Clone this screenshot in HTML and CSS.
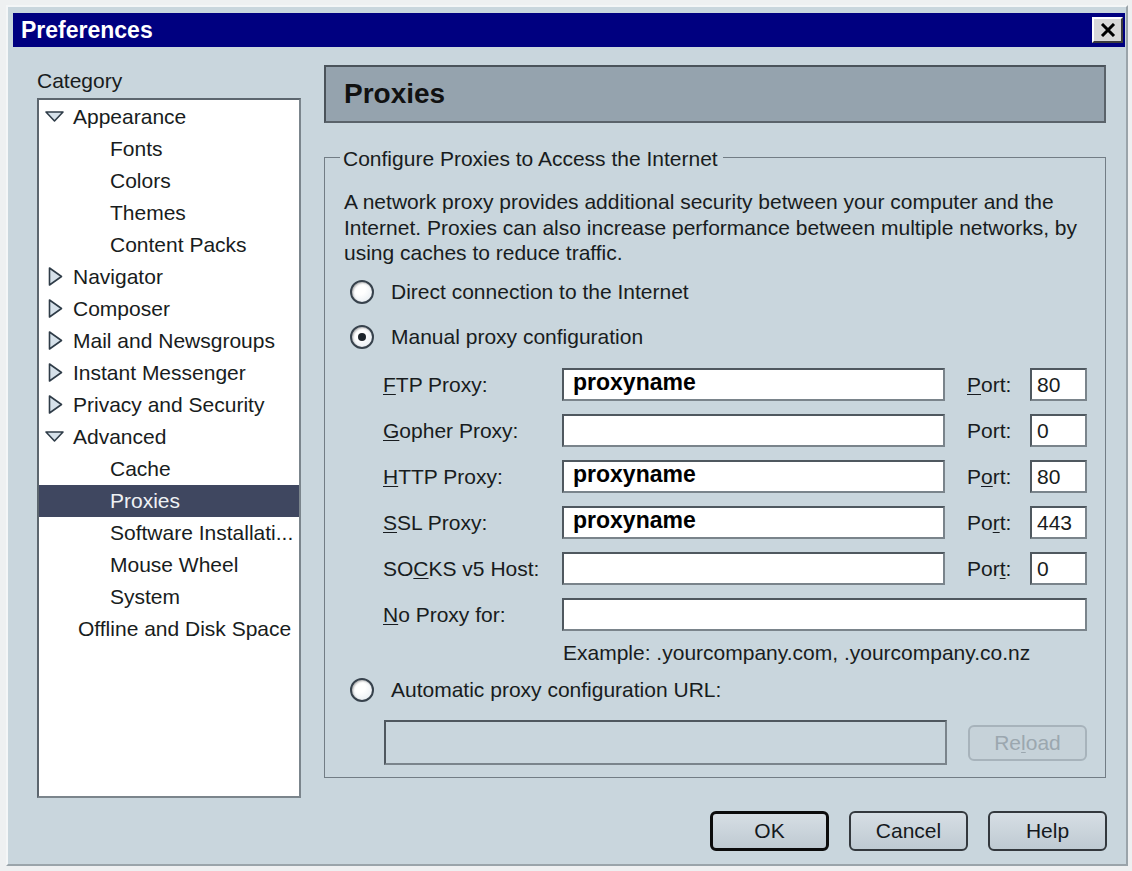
FILE: index.html
```html
<!DOCTYPE html>
<html lang="en">
<head>
<meta charset="utf-8">
<title>Preferences</title>
<link rel="stylesheet" href="styles.css">
</head>
<body>
<div class="window">
  <div class="titlebar">
    <span class="title">Preferences</span>
    <button class="close" aria-label="Close">
      <svg width="16" height="14" viewBox="0 0 16 14"><path d="M2 1 L14 13 M14 1 L2 13" stroke="#000" stroke-width="3" fill="none"/></svg>
    </button>
  </div>

  <div class="main">
    <div class="sidebar">
      <div class="cat-label">Category</div>
      <ul class="tree">
        <li class="row top"><svg class="twisty" viewBox="0 0 20 20"><polygon points="1,5 18,5 9.5,14" /></svg>Appearance</li>
        <li class="row child">Fonts</li>
        <li class="row child">Colors</li>
        <li class="row child">Themes</li>
        <li class="row child">Content Packs</li>
        <li class="row top"><svg class="twisty" viewBox="0 0 20 20"><polygon points="4.5,1 16.5,9.5 4.5,18" /></svg>Navigator</li>
        <li class="row top"><svg class="twisty" viewBox="0 0 20 20"><polygon points="4.5,1 16.5,9.5 4.5,18" /></svg>Composer</li>
        <li class="row top"><svg class="twisty" viewBox="0 0 20 20"><polygon points="4.5,1 16.5,9.5 4.5,18" /></svg>Mail and Newsgroups</li>
        <li class="row top"><svg class="twisty" viewBox="0 0 20 20"><polygon points="4.5,1 16.5,9.5 4.5,18" /></svg>Instant Messenger</li>
        <li class="row top"><svg class="twisty" viewBox="0 0 20 20"><polygon points="4.5,1 16.5,9.5 4.5,18" /></svg>Privacy and Security</li>
        <li class="row top"><svg class="twisty" viewBox="0 0 20 20"><polygon points="1,5 18,5 9.5,14" /></svg>Advanced</li>
        <li class="row child">Cache</li>
        <li class="row child selected">Proxies</li>
        <li class="row child">Software Installati...</li>
        <li class="row child">Mouse Wheel</li>
        <li class="row child">System</li>
        <li class="row leaf">Offline and Disk Space</li>
      </ul>
    </div>

    <div class="panel">
      <div class="panel-header">Proxies</div>
      <fieldset class="group">
        <legend>Configure Proxies to Access the Internet</legend>
        <p class="desc">A network proxy provides additional security between your computer and the<br>Internet. Proxies can also increase performance between multiple networks, by<br>using caches to reduce traffic.</p>

        <label class="radio-row first"><span class="radio"></span>Direct connection to the Internet</label>
        <label class="radio-row second"><span class="radio checked"></span>Manual proxy configuration</label>

        <div class="proxy-grid">
          <span class="field-label"><u>F</u>TP Proxy:</span>
          <input class="field host" type="text" value="proxyname" readonly>
          <span class="port-label"><u>P</u>ort:</span>
          <input class="field port" type="text" value="80" readonly>

          <span class="field-label"><u>G</u>opher Proxy:</span>
          <input class="field host" type="text" value="" readonly>
          <span class="port-label">Port:</span>
          <input class="field port" type="text" value="0" readonly>

          <span class="field-label"><u>H</u>TTP Proxy:</span>
          <input class="field host" type="text" value="proxyname" readonly>
          <span class="port-label">P<u>o</u>rt:</span>
          <input class="field port" type="text" value="80" readonly>

          <span class="field-label"><u>S</u>SL Proxy:</span>
          <input class="field host" type="text" value="proxyname" readonly>
          <span class="port-label">Po<u>r</u>t:</span>
          <input class="field port" type="text" value="443" readonly>

          <span class="field-label">SO<u>C</u>KS v5 Host:</span>
          <input class="field host" type="text" value="" readonly>
          <span class="port-label">Por<u>t</u>:</span>
          <input class="field port" type="text" value="0" readonly>

          <span class="field-label"><u>N</u>o Proxy for:</span>
          <input class="field wide" type="text" value="" readonly>
        </div>

        <div class="example">Example: .yourcompany.com, .yourcompany.co.nz</div>

        <label class="radio-row third"><span class="radio"></span>Automatic proxy configuration URL:</label>

        <div class="url-row">
          <input class="field url" type="text" value="" disabled>
          <button class="btn reload" disabled>Re<u>l</u>oad</button>
        </div>
      </fieldset>
    </div>
  </div>

  <div class="footer">
    <button class="btn default">OK</button>
    <button class="btn">Cancel</button>
    <button class="btn">Help</button>
  </div>
</div>
</body>
</html>
```

FILE: styles.css
```css
* {
  box-sizing: border-box;
}

html,
body {
  margin: 0;
}

body {
  width: 1132px;
  height: 871px;
  overflow: hidden;
  background: #eef0f1;
  font-family: "Liberation Sans", Arial, sans-serif;
  font-size: 21px;
  color: #181c20;
}

u {
  text-decoration: underline;
  text-underline-offset: 2px;
  text-decoration-thickness: 1px;
}

/* ---------- window frame ---------- */

.window {
  margin: 5px 0 0 6px;
  width: 1122px;
  height: 861px;
  background: #c9d6dd;
  border: 2px solid;
  border-color: #f4f6f7 #9aa4aa #9aa4aa #f4f6f7;
  padding: 6px 1px 0 5px;
  display: flex;
  flex-direction: column;
}

.titlebar {
  height: 34px;
  background: #000080;
  display: flex;
  align-items: center;
  justify-content: space-between;
  padding: 0 2px 0 8px;
}

.title {
  color: #fff;
  font-weight: bold;
  font-size: 23px;
}

.close {
  width: 31px;
  height: 26px;
  padding: 0;
  background: #d8d8d8;
  border: 2px solid;
  border-color: #ffffff #3c3c3c #3c3c3c #ffffff;
  display: flex;
  align-items: center;
  justify-content: center;
}

/* ---------- main area ---------- */

.main {
  display: flex;
  gap: 23px;
  padding: 18px 19px 0 24px;
}

.sidebar {
  width: 264px;
  flex: none;
  padding-top: 4px;
}

.cat-label {
  line-height: 24px;
  margin-bottom: 5px;
}

.tree {
  list-style: none;
  margin: 0;
  padding: 1px 0;
  height: 700px;
  background: #fff;
  border: 2px solid;
  border-color: #5c666e #7b858c #7b858c #5c666e;
}

.row {
  height: 32px;
  display: flex;
  align-items: center;
  white-space: nowrap;
  overflow: hidden;
}

.row.top {
  padding-left: 6px;
}

.row.child {
  padding-left: 71px;
}

.row.leaf {
  padding-left: 39px;
}

.row.selected {
  background: #3f4760;
  color: #eef1f4;
}

.twisty {
  width: 20px;
  height: 20px;
  margin-right: 8px;
  flex: none;
}

.twisty polygon {
  fill: #d6e1ea;
  stroke: #2f3c48;
  stroke-width: 1.6;
  stroke-linejoin: round;
}

/* ---------- right panel ---------- */

.panel {
  width: 782px;
  flex: none;
}

.panel-header {
  height: 58px;
  background: #95a3ae;
  border: 2px solid;
  border-color: #4a535a #5a636a #5a636a #4a535a;
  padding-left: 18px;
  display: flex;
  align-items: center;
  font-weight: bold;
  font-size: 28px;
  color: #111;
}

.group {
  margin: 20px 0 0;
  min-width: 0;
  padding: 0 18px 12px 19px;
  border: 1px solid #727d85;
}

.group legend {
  margin-left: -4px;
  padding: 4px 5px 0 3px;
  line-height: 24px;
}

.desc {
  margin: 18px 0 0;
  line-height: 25.5px;
  white-space: nowrap;
}

.radio-row {
  height: 33px;
  display: flex;
  align-items: center;
  padding-left: 6px;
}

.radio-row.first {
  margin-top: 10px;
}

.radio-row.second {
  margin-top: 12px;
}

.radio-row.third {
  margin-top: 8.5px;
}

.radio {
  width: 24px;
  height: 24px;
  margin-right: 17px;
  border-radius: 50%;
  border: 2px solid #37424c;
  background: radial-gradient(circle at 40% 35%, #ffffff 30%, #e1e8ee);
  box-shadow: inset 1px 1px 2px rgba(0, 0, 0, 0.3);
  display: flex;
  align-items: center;
  justify-content: center;
  flex: none;
}

.radio.checked::after {
  content: "";
  width: 8px;
  height: 8px;
  border-radius: 50%;
  background: #1e252c;
}

/* proxy host / port table */

.proxy-grid {
  margin-top: 14.5px;
  padding-left: 39px;
  display: grid;
  grid-template-columns: 179px 383px 85px 57px;
  grid-auto-rows: 33px;
  row-gap: 13px;
  align-items: center;
}

.port-label {
  padding-left: 22px;
}

.field {
  width: 100%;
  height: 33px;
  margin: 0;
  padding: 0 0 0 5px;
  background: #fff;
  border: 2px solid;
  border-color: #4f585f #7a848b #7a848b #4f585f;
  border-radius: 0;
  font-family: "Liberation Sans", Arial, sans-serif;
  font-size: 21px;
  color: #181c20;
  outline: none;
}

.field.host {
  padding: 0 0 4px 9px;
  font-size: 23px;
  font-weight: bold;
  color: #000;
}

.field.wide {
  grid-column: 2 / 5;
}

.example {
  margin-top: 10px;
  padding-left: 219px;
  line-height: 24px;
}

.url-row {
  margin-top: 13.5px;
  height: 45px;
  padding-left: 40px;
  display: flex;
  align-items: center;
  gap: 21px;
}

.field.url {
  width: 563px;
  height: 45px;
  background: transparent;
}

/* ---------- buttons ---------- */

.btn {
  width: 119px;
  height: 40px;
  padding: 0;
  border: 2px solid #33383d;
  border-radius: 6px;
  background: linear-gradient(#d6dee4, #bfcad2);
  font-family: "Liberation Sans", Arial, sans-serif;
  font-size: 21px;
  color: #15191d;
}

.btn.default {
  border: 3px solid #0c0c0c;
}

.btn.reload {
  height: 36px;
  border-color: #a7b3bb;
  background: #c6d2d9;
  color: #9ba7af;
}

.footer {
  margin-top: 13px;
  padding-right: 18px;
  display: flex;
  justify-content: flex-end;
  gap: 20px;
}
```
